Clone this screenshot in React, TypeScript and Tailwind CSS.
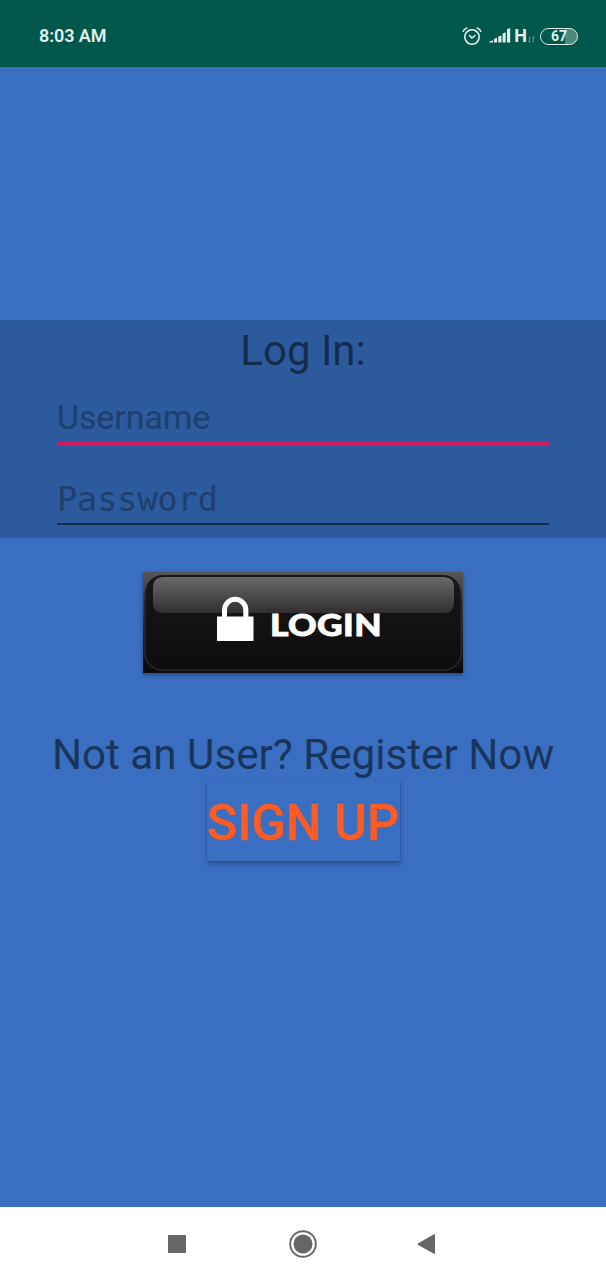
function StatusBar() {
  return (
    <header className="flex h-[67px] shrink-0 items-center justify-between bg-[#00574b] pt-[5px] pr-7 pl-[39px] text-[#e3efec]">
      <span className="text-[18px] leading-none font-semibold tracking-[-0.1px]">8:03 AM</span>
      <div className="flex items-center">
        <svg className="h-5 w-5" viewBox="0 0 20 20" fill="none" stroke="currentColor" strokeWidth="1.6" strokeLinecap="round">
          <circle cx="10" cy="11" r="7.2" />
          <path d="M7.5 9.7 10 12l3-2.5M1.3 5.2Q2.2 2.8 4.8 2M18.7 5.2Q17.8 2.8 15.2 2" />
        </svg>
        <svg className="ml-[7px] h-4 w-[23px]" viewBox="0 0 23 16" fill="currentColor">
          <path d="M.5 13.6 3.9 12.2v2.3H.5zM5 11l3.1-1.2v4.7H5zM9.3 8.6l3.1-1.2v7.1H9.3zM13.6 5.4l3.1-1.2v10.3h-3.1zM18 1.2 21.2 0v14.5H18z" />
        </svg>
        <span className="ml-[2px] text-[18px] leading-none font-bold">H</span>
        <svg className="ml-px h-4 w-[7px]" viewBox="0 0 7 16" fill="none" stroke="#6a9d92" strokeWidth="1">
          <path d="M1.7 8.5v6M.4 13l1.3 1.5M5.2 14.5v-6M6.5 10 5.2 8.5" />
        </svg>
        <div className="ml-[5px] flex h-[17px] w-[38px] items-center justify-center rounded-full border-[1.5px] border-[#e3efec] bg-linear-to-r from-transparent from-67% to-[#4b897c] to-67% text-[14px] leading-none font-bold">
          67
        </div>
      </div>
    </header>
  );
}

function LoginButton() {
  return (
    <button className="mt-[34px] grid h-[101px] w-[320px] shrink-0 bg-linear-to-b from-[#555] to-[#090909] text-white shadow-[0_2px_4px_rgba(0,0,0,0.35)]" aria-label="Login">
      <svg className="col-start-1 row-start-1 h-[101px] w-[320px]" viewBox="0 0 320 101">
        <defs>
          <linearGradient id="edge" x1="0" y1="0" x2="0" y2="1">
            <stop stopColor="#555554" />
            <stop offset=".3" stopColor="#292929" />
            <stop offset="1" stopColor="#292725" />
          </linearGradient>
          <linearGradient id="body" x1="0" y1="0" x2="0" y2="1">
            <stop stopColor="#181818" />
            <stop offset="1" stopColor="#0e0c0d" />
          </linearGradient>
          <linearGradient id="gloss" x1="0" y1="0" x2="0" y2="1">
            <stop stopColor="#6b6869" />
            <stop offset="1" stopColor="#302e2f" />
          </linearGradient>
        </defs>
        <rect x="1.8" y="2.3" width="316.5" height="96" rx="18" fill="url(#body)" stroke="url(#edge)" strokeWidth="1.5" />
        <path d="M21 5H300Q311 5 311 15V31Q311 41 301 41H20Q10 41 10 31V16Q10 5 21 5Z" fill="url(#gloss)" />
        <path d="M74 44.5h5V38a13.2 13.2 0 0 1 26.4 0v6.5h5.1V69H74zM84 44.5h16.3V38a8.15 8.15 0 0 0-16.3 0z" fill="#fff" fillRule="evenodd" />
      </svg>
      <span className="col-start-1 row-start-1 mt-[4px] ml-[127px] origin-left scale-x-[1.16] self-center justify-self-start font-[Lato] text-[30.5px] leading-none font-black tracking-[0.3px] [-webkit-text-stroke:0.8px_white]">
        LOGIN
      </span>
    </button>
  );
}

export default function App() {
  return (
    <div className="flex h-[1280px] w-[606px] flex-col overflow-hidden bg-[#396ec0] font-[Roboto,sans-serif]">
      <StatusBar />
      <main className="flex min-h-0 flex-1 flex-col items-center pt-[253px]">
        <section className="flex h-[218px] w-full shrink-0 flex-col bg-[#2d5a9d] px-[57px] pt-[6px]">
          <h1 className="text-center text-[42px] leading-[50px] text-[#142d4e]">Log In:</h1>
          <input
            type="text"
            placeholder="Username"
            className="mt-[16px] h-[54px] w-full border-b-4 border-[#d01b60] pt-px text-[33.8px] leading-[42px] outline-none placeholder:text-[#1f3f6e] placeholder:opacity-100"
          />
          <input
            type="password"
            placeholder="Password"
            className="mt-[29px] h-[50px] w-full border-b-2 border-[#142d4e] font-['DejaVu_Sans_Mono',monospace] text-[33.4px] leading-[42px] outline-none placeholder:text-[#1f3f6e] placeholder:opacity-100"
          />
        </section>
        <LoginButton />
        <p className="mt-[57px] text-[42.2px] leading-[50px] whitespace-nowrap text-[#1a355c]">Not an User? Register Now</p>
        <button className="h-[81px] w-[193px] shrink-0 pt-[6px] text-[50.4px] leading-none font-medium whitespace-nowrap text-[#ff5b22] shadow-[0_3px_4px_rgba(0,0,0,0.28),0_0_2px_rgba(0,0,0,0.08)] [-webkit-text-stroke:0.3px_#ff5b22]">
          SIGN UP
        </button>
      </main>
      <nav className="flex h-[73px] shrink-0 items-center justify-center gap-[98px] bg-white text-[#666]">
        <svg className="h-7 w-7" viewBox="0 0 28 28" fill="currentColor">
          <rect x="5" y="5" width="18" height="18" rx=".7" />
        </svg>
        <svg className="h-7 w-7" viewBox="0 0 28 28" fill="currentColor">
          <circle cx="14" cy="14" r="9.5" />
          <circle cx="14" cy="14" r="12.8" fill="none" stroke="currentColor" strokeWidth="1.9" />
        </svg>
        <svg className="h-7 w-7" viewBox="0 0 28 28" fill="currentColor">
          <path d="M3.2 13.2 19 4.2q1-.5 1 .6v18.5q0 1-1 .5L3.2 15q-1.5-.9 0-1.8z" />
        </svg>
      </nav>
    </div>
  );
}
